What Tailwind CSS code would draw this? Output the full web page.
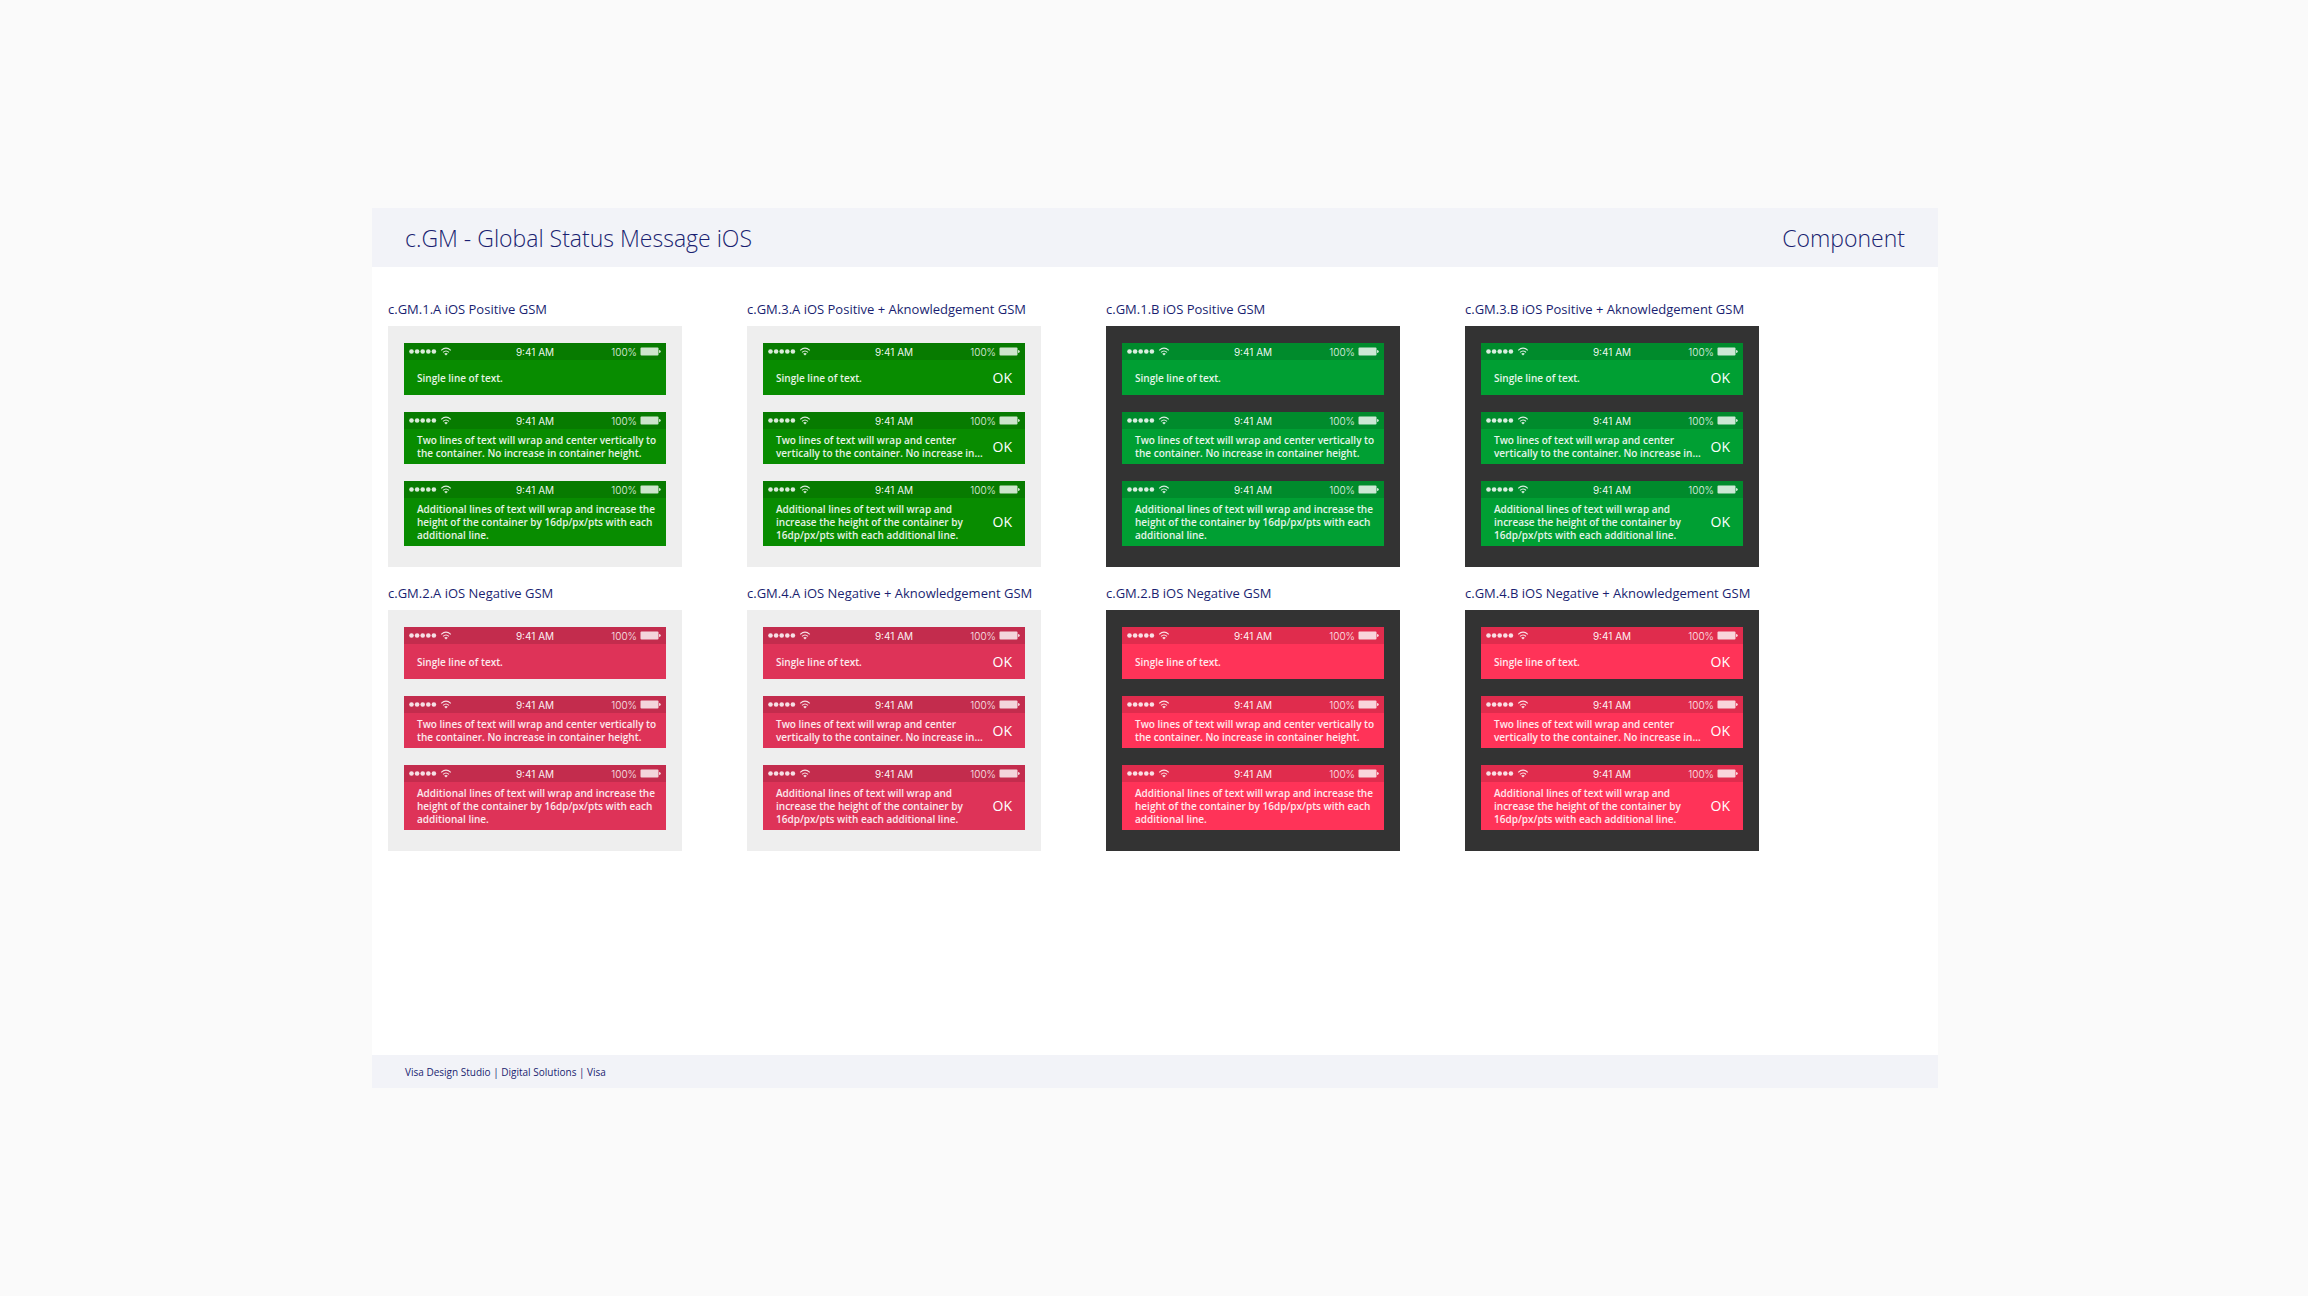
<!DOCTYPE html>
<html lang="en">
<head>
<meta charset="utf-8">
<meta name="viewport" content="width=device-width, initial-scale=1">
<title>c.GM - Global Status Message iOS</title>
<script src="https://cdn.jsdelivr.net/npm/@tailwindcss/browser@4"></script>
</head>
<body class="flex min-h-screen items-center justify-center bg-[#fafafa] pl-[2px] font-['Open_Sans',sans-serif] text-[#1a1f71]">
<svg class="hidden" aria-hidden="true">
  <symbol id="signal" viewBox="0 0 28 5">
    <circle cx="2.5" cy="2.5" r="2.3"/><circle cx="8.1" cy="2.5" r="2.3"/><circle cx="13.7" cy="2.5" r="2.3"/><circle cx="19.3" cy="2.5" r="2.3"/><circle cx="24.9" cy="2.5" r="2.3"/>
  </symbol>
  <symbol id="wifi" viewBox="0 0 12 9">
    <path d="M1.2 3.4Q6 -1.2 10.8 3.4M3 5.4Q6 2.6 9 5.4" fill="none" stroke="currentColor" stroke-width="1.1"/>
    <path d="M6 8.6L4.2 6.7Q6 5.3 7.8 6.7Z"/>
  </symbol>
  <symbol id="battery" viewBox="0 0 21 9">
    <rect x="0.5" y="0.5" width="18" height="8" rx="1"/>
    <path d="M19 3Q20.8 3.4 20.8 4.5Q20.8 5.6 19 6Z"/>
  </symbol>
</svg>

<main class="w-full max-w-[1566px] bg-white">
  <header class="flex h-[59px] items-center justify-between bg-[#f2f3f8] px-[33px] pt-px text-[23px] font-light">
    <h1>c.GM - Global Status Message iOS</h1>
    <p>Component</p>
  </header>
  <div id="boards" class="flex min-h-[788px] flex-wrap content-start gap-x-[65px] gap-y-[18px] px-4 pt-[34px]"></div>
  <footer class="flex h-[33px] items-center bg-[#f2f3f8] px-[33px] pt-px text-[10px]">Visa Design Studio | Digital Solutions | Visa</footer>
</main>

<script>
  const plain = [
    'Single line of text.',
    'Two lines of text will wrap and center vertically to<br>the container. No increase in container height.',
    'Additional lines of text will wrap and increase the<br>height of the container by 16dp/px/pts with each<br>additional line.'
  ];
  const withAction = [
    'Single line of text.',
    'Two lines of text will wrap and center<br>vertically to the container. No increase in...',
    'Additional lines of text will wrap and<br>increase the height of the container by<br>16dp/px/pts with each additional line.'
  ];
  const boards = [
    { title: 'c.GM.1.A iOS Positive GSM', panel: 'bg-[#eeeeee]', fill: 'bg-[#088c00]' },
    { title: 'c.GM.3.A iOS Positive + Aknowledgement GSM', panel: 'bg-[#eeeeee]', fill: 'bg-[#088c00]', ok: true },
    { title: 'c.GM.1.B iOS Positive GSM', panel: 'bg-[#333333]', fill: 'bg-[#009f33]' },
    { title: 'c.GM.3.B iOS Positive + Aknowledgement GSM', panel: 'bg-[#333333]', fill: 'bg-[#009f33]', ok: true },
    { title: 'c.GM.2.A iOS Negative GSM', panel: 'bg-[#eeeeee]', fill: 'bg-[#de3358]' },
    { title: 'c.GM.4.A iOS Negative + Aknowledgement GSM', panel: 'bg-[#eeeeee]', fill: 'bg-[#de3358]', ok: true },
    { title: 'c.GM.2.B iOS Negative GSM', panel: 'bg-[#333333]', fill: 'bg-[#ff3358]' },
    { title: 'c.GM.4.B iOS Negative + Aknowledgement GSM', panel: 'bg-[#333333]', fill: 'bg-[#ff3358]', ok: true }
  ];
  const message = (text, fill, ok) => `
    <article class="${fill} text-white">
      <div class="grid h-[17px] grid-cols-3 items-center bg-black/12 px-[5px] font-['Inter',sans-serif] text-[10px] leading-4">
        <div class="flex items-center gap-[3px] text-white/85">
          <svg class="h-[5px] w-7" fill="currentColor"><use href="#signal"/></svg>
          <svg class="h-[9px] w-3" fill="currentColor"><use href="#wifi"/></svg>
        </div>
        <span class="text-center text-white/95">9:41 AM</span>
        <div class="flex items-center justify-end gap-[3px]">
          <span class="font-light text-white/90">100%</span>
          <svg class="h-[9px] w-[21px] text-white/80" fill="currentColor"><use href="#battery"/></svg>
        </div>
      </div>
      <div class="flex min-h-[35px] items-center justify-between px-[13px] py-1">
        <p class="pt-px text-[10px] leading-[13px] font-semibold whitespace-nowrap text-white/90">${text}</p>
        ${ok ? '<button type="button" class="text-[14px] leading-4 font-medium">OK</button>' : ''}
      </div>
    </article>`;
  document.getElementById('boards').innerHTML = boards.map(b => `
    <section class="w-[294px]">
      <h2 class="h-[25px] text-[13px] leading-4 whitespace-nowrap">${b.title}</h2>
      <div class="${b.panel} flex min-h-[241px] flex-col gap-[17px] px-4 pt-[17px] pb-[21px]">
        ${(b.ok ? withAction : plain).map(t => message(t, b.fill, b.ok)).join('')}
      </div>
    </section>`).join('');
</script>
</body>
</html>
